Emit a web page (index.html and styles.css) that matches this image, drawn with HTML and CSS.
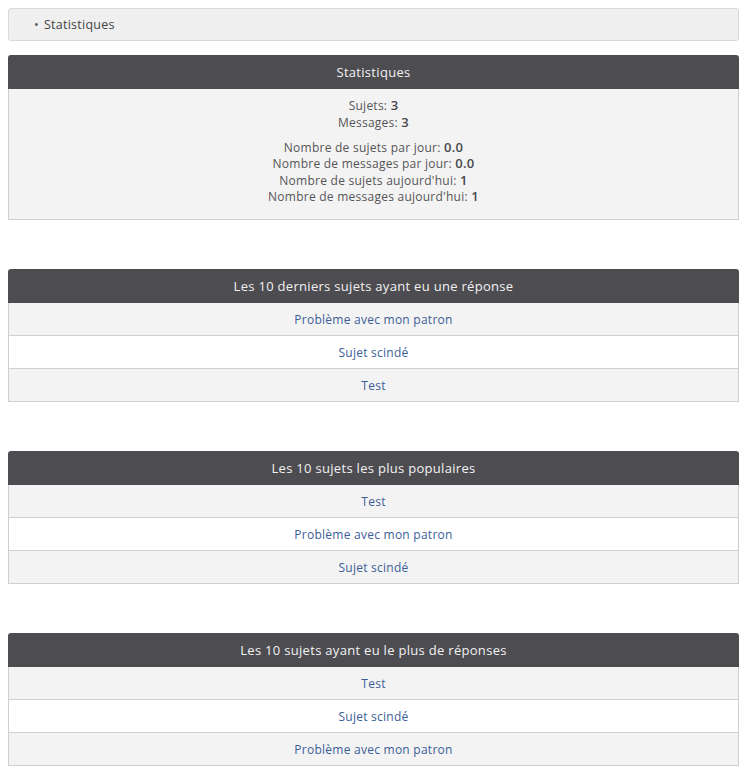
FILE: index.html
```html
<!DOCTYPE html>
<html lang="fr">
<head>
<meta charset="utf-8">
<link rel="stylesheet" href="styles.css">
</head>
<body>
<div class="crumbs">
  <ul><li>Statistiques</li></ul>
</div>

<section class="panel">
  <h2 class="panel-head">Statistiques</h2>
  <div class="stats">
    <p>Sujets: <b>3</b><br>Messages: <b>3</b></p>
    <p>Nombre de sujets par jour: <b>0.0</b><br>Nombre de messages par jour: <b>0.0</b><br>Nombre de sujets aujourd'hui: <b>1</b><br>Nombre de messages aujourd'hui: <b>1</b></p>
  </div>
</section>

<section class="panel">
  <h2 class="panel-head">Les 10 derniers sujets ayant eu une réponse</h2>
  <ul class="rows">
    <li><a href="#">Problème avec mon patron</a></li>
    <li><a href="#">Sujet scindé</a></li>
    <li><a href="#">Test</a></li>
  </ul>
</section>

<section class="panel">
  <h2 class="panel-head">Les 10 sujets les plus populaires</h2>
  <ul class="rows">
    <li><a href="#">Test</a></li>
    <li><a href="#">Problème avec mon patron</a></li>
    <li><a href="#">Sujet scindé</a></li>
  </ul>
</section>

<section class="panel">
  <h2 class="panel-head">Les 10 sujets ayant eu le plus de réponses</h2>
  <ul class="rows">
    <li><a href="#">Test</a></li>
    <li><a href="#">Sujet scindé</a></li>
    <li><a href="#">Problème avec mon patron</a></li>
  </ul>
</section>
</body>
</html>
```

FILE: styles.css
```css
html, body {
  margin: 0;
  padding: 0;
  background: #ffffff;
}
body {
  padding: 8px;
  font-family: "Open Sans", "DejaVu Sans", sans-serif;
  font-size: 12px;
  letter-spacing: 0.25px;
  color: #555558;
}
.crumbs {
  background: #efefef;
  border: 1px solid #d9d9d9;
  border-radius: 3px;
  height: 31px;
  display: flex;
  align-items: center;
}
.crumbs ul {
  margin: 0;
  padding: 0 0 0 25px;
  list-style: none;
}
.crumbs li {
  color: #444;
  font-size: 12.5px;
}
.crumbs li::before {
  content: "•";
  margin-right: 5px;
  color: #555;
}
.panel {
  margin-top: 14px;
}
.panel + .panel {
  margin-top: 49px;
}
.panel-head {
  margin: 0;
  height: 34px;
  display: flex;
  align-items: center;
  justify-content: center;
  background: #4d4c51;
  color: #f2f2f2;
  font-size: 13px;
  letter-spacing: 0.3px;
  font-weight: normal;
  border-radius: 3px 3px 0 0;
}
.stats {
  background: #f3f3f3;
  border: 1px solid #cfcfcf;
  border-top: none;
  text-align: center;
  padding: 9px 0 13px;
  line-height: 16.5px;
  font-size: 12px;
}
.stats p {
  margin: 0;
}
.stats p + p {
  margin-top: 8.5px;
}
.stats b {
  font-weight: 600;
  color: #48484c;
  font-size: 13px;
  line-height: 0;
}
.rows {
  list-style: none;
  margin: 0;
  padding: 0;
  border: 1px solid #cfcfcf;
  border-top: none;
}
.rows li {
  height: 32px;
  box-sizing: border-box;
  padding-top: 2px;
  display: flex;
  align-items: center;
  justify-content: center;
  background: #f3f3f3;
  border-top: 1px solid #d0d0d0;
}
.rows li + li {
  height: 33px;
}
.rows li:first-child {
  border-top: none;
}
.rows li:nth-child(2) {
  background: #ffffff;
}
.rows a {
  color: #3b5e98;
  text-decoration: none;
  font-size: 12px;
}
```
